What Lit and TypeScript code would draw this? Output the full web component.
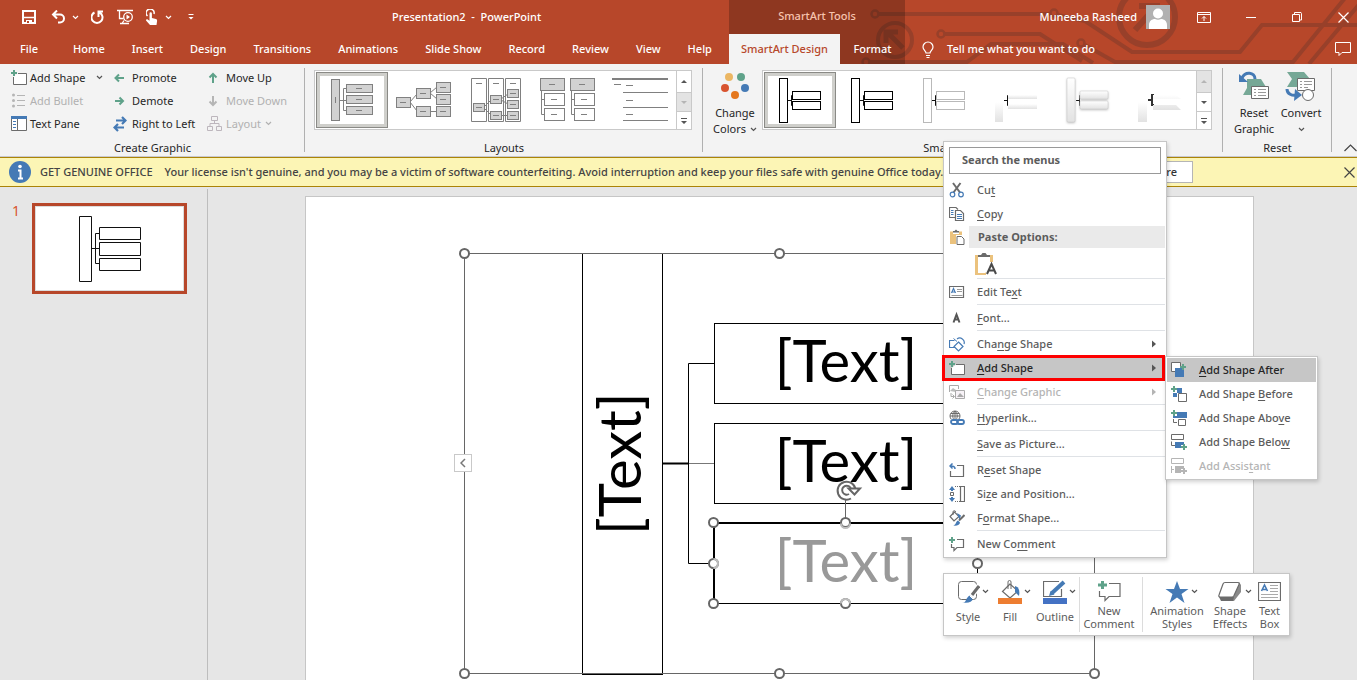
import { LitElement, html, css, svg, nothing } from "lit";
import { customElement } from "lit/decorators.js";
import { classMap } from "lit/directives/class-map.js";

const icon = (w: number, h: number, body: unknown) =>
  html`<svg class="ic" width=${w} height=${h} viewBox="0 0 ${w} ${h}" fill="none" aria-hidden="true">${body}</svg>`;

const GREEN = "#5fa28a";
const BLUE = "#457ab5";
const GREY = "#6b6b6b";

const plus = (x: number, y: number, c = GREEN) =>
  svg`<path d="M${x} ${y}h6M${x + 3} ${y - 3}v6" stroke=${c} stroke-width="2"/>`;

const chevron = (c = "#555") => icon(7, 5, svg`<path d="M1 1l2.5 2.5L6 1" stroke=${c} stroke-width="1.2"/>`);

/* Ribbon command icons */
const addShape = icon(16, 15, svg`<path d="M7 3.500h8.500v11H2.500V7" fill="#fff"/><path d="M7 3.500h8.500v11H2.500V7" stroke=${GREY}/>${plus(0, 3)}`);
const addBullet = icon(16, 15, svg`<g fill="#b5b5b5"><circle cx="2.500" cy="2" r="1.500"/><circle cx="2.500" cy="7.500" r="1.500"/><circle cx="2.500" cy="13" r="1.500"/></g><path d="M6 2.500h8M6 7.500h8M6 12.500h8" stroke="#b5b5b5"/>`);
const textPane = icon(16, 15, svg`<path d="M.5.5h15v14H.5z" fill="#fff" stroke=${GREY}/><path d="M0 0h16v3H0z" fill=${BLUE}/><path d="M6.500 3v12" stroke=${GREY}/><path d="M2 5.500h3M2 8.500h3M2 11.500h3" stroke=${BLUE}/>`);
const promote = icon(14, 12, svg`<path d="M11 6H3M6 2.500L2.500 6 6 9.500" stroke=${GREEN} stroke-width="2"/>`);
const demote = icon(14, 12, svg`<path d="M2 6h8M6.500 2.500L10 6 6.500 9.500" stroke=${GREEN} stroke-width="2"/>`);
const rtl = icon(14, 16, svg`<path d="M3 4.500h9M9 1l3.500 3.500L9 8M11 11.500H2M5 8l-3.500 3.500L5 15" stroke=${BLUE} stroke-width="2.200"/>`);
const moveUp = icon(14, 12, svg`<path d="M6 11V3M2.500 5.500L6 2l3.500 3.500" stroke=${GREEN} stroke-width="2"/>`);
const moveDown = icon(14, 12, svg`<path d="M6 1v8M2.500 6.500L6 10l3.500-3.500" stroke="#b5b5b5" stroke-width="2"/>`);
const layoutIcon = icon(16, 15, svg`<path d="M4.500.5h6v4h-6zM.5 10.500h5v4h-5zM9.500 10.500h5v4h-5zM7.500 5v3M3 10V7.500h9V10" stroke="#bdb6bd"/>`);

/* Title bar icons */
const save = icon(14, 14, svg`<path d="M1 1h12v12H1z" stroke="#fff" stroke-width="2"/><path d="M1 7.500h12" stroke="#fff" stroke-width="1.500"/><path d="M4 10h6v4H4z" fill="#fff"/><path d="M5 11h2v2H5z" fill="#b7472a"/>`);
const undo = icon(15, 14, svg`<path d="M2 4.500h7a4 4 0 0 1 0 8H7M6 .5l-4 4 4 4" stroke="#fff" stroke-width="2"/>`);
const redo = icon(14, 14, svg`<path d="M3.500 2.500a5.500 5.500 0 1 0 5 0M7.500 7V1.500H12" stroke="#fff" stroke-width="2"/>`);
const show = icon(17, 16, svg`<path d="M0 1.500h16M2.500 2v7.500h4M5 14.500l2-3M3 14.500h9" stroke="#fff" stroke-width="1.300"/><circle cx="11" cy="8" r="4.300" stroke="#fff" stroke-width="1.300" fill="#b7472a"/><path d="M9.500 5.500v5L13 8z" fill="#fff"/>`);
const touch = icon(13, 16, svg`<path d="M1.500 7A4 4 0 1 1 8 5" stroke="#fff" stroke-width="1.500"/><path d="M3.500 4.500a1.200 1.200 0 0 1 2.400 0V9l4 1c1 .3 1.300 1 1.200 2l-.6 4H4L0 11.500c0-1 1-1.500 2-.8l1.500 1z" fill="#fff"/>`);
const customize = icon(8, 8, svg`<path d="M1.500 1.500h5" stroke="#fff"/><path d="M1.500 4h5L4 6.500z" fill="#fff"/>`);
const bulb = icon(12, 17, svg`<path d="M4 12c0-2-3-3-3-6a5 5 0 0 1 10 0c0 3-3 4-3 6zM4 14.500h4M4.500 16.500h3" stroke="#fff" stroke-width="1.200"/>`);
const comment = icon(17, 15, svg`<path d="M.5.500h15v10H7l-3 3v-3H.5z" stroke="#fff"/>`);
const ribbonOpts = icon(14, 11, svg`<path d="M.5.5h13v10H.5zM.5 2.500h13M7 9V4.500M5 6.500l2-2 2 2" stroke="#fff"/>`);
const minimize = icon(11, 11, svg`<path d="M0 5.500h10" stroke="#fff"/>`);
const restore = icon(11, 11, svg`<path d="M.5 2.500h7v7h-7zM2.500 2.500v-2H9l.5 1V8H8" stroke="#fff"/>`);
const closeIcon = (c: string) => icon(11, 11, svg`<path d="M.5.5l10 10M10.500.5l-10 10" stroke=${c} stroke-width="1.200"/>`);

/* Context menu icons */
const M = {
  cut: icon(16, 16, svg`<path d="M4 1l7 9.500M11.500 1l-7 9.500" stroke=${GREY} stroke-width="2"/><circle cx="3.500" cy="12.500" r="2.300" stroke=${BLUE} stroke-width="1.200" fill="#fff"/><circle cx="12" cy="12.500" r="2.300" stroke=${BLUE} stroke-width="1.200" fill="#fff"/>`),
  copy: icon(16, 16, svg`<path d="M6 11.500H.5v-10H7l2 2M6.500 4.500h5l3 3v7h-8z" stroke=${GREY} stroke-width="1.200"/><path d="M2 4.500h2.500M2 6.500h2.500M2 8.500h2.500M8 8.500h5M8 10.500h5M8 12.500h5" stroke=${BLUE}/>`),
  paste: icon(16, 16, svg`<path d="M1 2.500h3V5h6V2.500h3V6H7v9H1z" fill="#ebc27d"/><path d="M4 3.500h6V2H8.500L7 .5 5.500 2H4z" fill=${GREY}/><path d="M8 7.500h4.500l2.500 2.500v5.500H8z" fill="#fff" stroke=${GREY}/>`),
  editText: icon(16, 14, svg`<path d="M.5 1.500h14v11H.5z" fill="#fff" stroke=${GREY} stroke-width="1.200"/><path d="M2.500 8l2-4.500 2 4.500M3 7h3" stroke=${BLUE} stroke-width="1.200"/><path d="M8 4.500h5M8 6.500h5M2.500 10.500h11" stroke="#9a9a9a"/>`),
  font: icon(16, 14, svg`<path d="M4.500 11.500L7.500 3.500l3 8M5.500 8.500h4" stroke="#555" stroke-width="2"/>`),
  changeShape: icon(16, 16, svg`<path d="M6 11.500H.5v-7h5M8 3a4.500 4.500 0 0 1 7 5" stroke=${BLUE} stroke-width="1.200"/><path d="M4.500 2.500l3.500 3" stroke=${BLUE}/><path d="M9.500 6l4.500 4.500L9.500 15 5 10.500z" stroke=${BLUE} stroke-width="1.200" fill="#fff"/>`),
  addShape: icon(16, 15, svg`<path d="M7 3.500h8.500v10H2.500V7" fill="#fff" stroke=${GREY}/>${plus(0, 3)}`),
  changeGraphic: icon(16, 16, svg`<path d="M.5 8V1.500h9V5" stroke="#aaa"/><path d="M1 7l3-3 3 2v2z" fill="#bbb"/><path d="M2 9v3.500h3M3.500 10.500l2 2-2 2" stroke="#aaa"/><path d="M6.500 6.500h9v8h-9z" fill="#f7f2f7" stroke="#aaa"/><path d="M8 13l3-4 4 4z" fill="#aaa"/>`),
  link: icon(16, 16, svg`<circle cx="6" cy="6" r="5" stroke=${GREY}/><path d="M1 6h10M6 1v10M2 3.500h8M6 1C3 4 3 8 6 11M6 1c3 3 3 7 0 10" stroke=${GREY}/><path d="M1 9h15v7H1z" fill="#fff"/><rect x="2" y="10" width="7" height="4" rx="2" stroke=${BLUE} stroke-width="1.800"/><rect x="8" y="10" width="7" height="4" rx="2" stroke=${BLUE} stroke-width="1.800"/>`),
  reset: icon(16, 15, svg`<path d="M8 2.500h6.500v11H1.500V8" stroke=${GREY} stroke-width="1.200"/><path d="M6 6c0-2-1-3-4-3M3.500.5L1 3l2.500 2.500" stroke=${BLUE} stroke-width="1.500"/>`),
  size: icon(16, 16, svg`<path d="M0 4l3-4 3 4zM0 12l3 4 3-4z" fill=${BLUE}/><path d="M3 3v2M3 11v2" stroke=${BLUE} stroke-width="2"/><path d="M1.500 6.500h3v3h-3z" fill="#fff" stroke=${GREY}/><path d="M6 .5h5M6 15.500h5" stroke=${GREY} stroke-dasharray="1 1"/><path d="M11.500.5h4v15h-4z" stroke=${GREY} stroke-width="1.200"/>`),
  format: icon(16, 16, svg`<path d="M5.500 2L1 6.500 5 11l5-4.500z" stroke=${GREY} stroke-width="1.200"/><path d="M4 5V2a1.300 1.300 0 0 1 2.600 0" stroke=${GREY}/><path d="M8 3l4 2.500-1.500 4.500z" fill=${BLUE}/><path d="M15.500 5L10 10.500" stroke=${GREY} stroke-width="2"/><path d="M4 15.500c3 0 2.500-4 5-5l2 2c0 2.500-3 3.500-7 3z" fill=${BLUE}/>`),
  comment: icon(16, 15, svg`<path d="M8 2.500h6.500v8H8l-3 3v-3H2.500V7" stroke=${GREY} stroke-width="1.200"/>${plus(0, 3)}`),
};

/* Submenu icons */
const S = {
  after: icon(16, 16, svg`<path d="M.5.500h9v9h-9z" fill="#fff" stroke=${GREY}/><path d="M4 6h9v9H4z" fill=${BLUE}/>${plus(9, 5)}`),
  before: icon(16, 16, svg`<path d="M6 2h5v5H6z" fill=${BLUE}/><path d="M2 7h4v4H2z" fill=${BLUE}/><path d="M7.500 7.500h8v8h-8z" fill="#fff" stroke=${GREY}/>${plus(0, 3)}`),
  above: icon(16, 16, svg`<path d="M6 2h10v6H2V6h4z" fill=${BLUE}/><path d="M2.500 9v3.500H6M7.500 9.500h7v6h-7z" stroke=${GREY}/>${plus(0, 3)}`),
  below: icon(16, 16, svg`<path d="M.5.500h12v5H.5zM.5 7.500v4H4" stroke=${GREY}/><path d="M4 8h9v3h-3v3H4z" fill=${BLUE}/>${plus(10, 13)}`),
  assistant: icon(16, 16, svg`<path d="M.5.500h12v5H.5zM.5 8v7M1 11.500h2" stroke="#b5b5b5"/><path d="M4 8h9v3h-3v4H4z" fill="#b5b5b5"/>${plus(10, 13, "#b5b5b5")}`),
};

type Box = [number, number, number, number, boolean?];
const boxes = (list: Box[]) => list.map(([x, y, w, h, plain]) => svg`
  <rect x=${x} y=${y} width=${w} height=${h} fill=${plain ? "#fff" : "#d2d2d2"} stroke="#808080"/>
  <path d=${w > 10 ? `M${Math.floor(x + w / 2) - 3} ${Math.floor(y + h / 2) + 0.5}h6` : `M${x + w / 2} ${y + h / 2 - 3}v6`} stroke="#808080"/>`);

const layouts = [
  svg`<path d="M24 28.500h7M31 16.500h-3.500v22H31" stroke="#808080"/>${boxes([[15.5, 7.5, 8, 41], [30.5, 12.5, 26, 8], [30.5, 23.5, 26, 8], [30.5, 34.5, 26, 8]])}`,
  svg`<path d="M22 30l7-8M22 30l7 9M42 21l7-6M42 21l7 6M42 39.500h7" stroke="#808080"/>${boxes([[8.5, 25.5, 14, 10], [28.5, 16.5, 14, 10], [28.5, 34.5, 14, 10], [48.5, 10.5, 14, 10], [48.5, 22.5, 14, 10], [48.5, 34.5, 14, 10]])}`,
  svg`<path d="M11.500 6.500h15v43h-15zM28.500 6.500h15v43h-15zM45.500 6.500h15v43h-15zM16 11.500h6M33 11.500h6M50 11.500h6" stroke="#808080"/><path d="M24 35l7-7M24 36l7 7M41 27l7-5M41 28l7 4M41 43.500h7" stroke="#808080"/>${boxes([[13.5, 31.5, 11, 8], [30.5, 23.5, 11, 8], [30.5, 39.5, 11, 8], [47.5, 17.5, 11, 8], [47.5, 28.5, 11, 8], [47.5, 39.5, 11, 8]])}`,
  svg`<path d="M9.500 18v24.500H13M9.500 27.500H13M39.500 18v24.500H43M39.500 27.500H43" stroke="#808080"/>${boxes([[8.5, 6.5, 24, 12], [38.5, 6.5, 24, 12], [12.5, 21.5, 20, 12, true], [12.5, 36.5, 20, 12, true], [42.5, 21.5, 20, 12, true], [42.5, 36.5, 20, 12, true]])}`,
  svg`<path d="M8 7h56" stroke="#808080" stroke-width="2"/><path d="M10 12.500h7M22 13.500h7M19 20.500h45M22 28.500h7M19 35.500h45M22 42.500h7M19 48.500h45" stroke="#808080"/>`,
];

const bracket = svg`<path d="M24 28.500h3M30 23.500h-2.500v10H30" stroke="#111"/>`;
const outlined = (c: string, w: number) => svg`${bracket}<g fill="#fff" stroke=${c} stroke-width=${w}><rect x="15.500" y="6.500" width="8" height="44"/><rect x="28.500" y="19.500" width="28" height="8"/><rect x="28.500" y="29.500" width="28" height="8"/></g>`;
const styles6 = [
  outlined("#000", 1),
  outlined("#000", 1),
  outlined("#b9b9b9", 1),
  svg`${bracket}<g fill="url(#fade)"><rect x="15" y="30" width="8" height="20"/><rect x="28" y="23" width="29" height="4"/><rect x="28" y="32" width="29" height="5"/></g>`,
  svg`${bracket}<g fill="url(#fade)" stroke="#c5c5c5" stroke-width=".5" class="raised"><rect x="15" y="6" width="8" height="44" rx="1"/><rect x="28" y="19" width="28" height="8" rx="1"/><rect x="28" y="29" width="28" height="8" rx="1"/></g>`,
  svg`<path d="M24 28h3M30 23h-2v10h2" stroke="#333" stroke-width="2"/><g fill="url(#fade)"><rect x="14" y="30" width="9" height="20"/><path d="M29 27v-4h23l5 4zM29 38v-5h23l5 5z"/></g>`,
];
const fade = svg`<defs><linearGradient id="fade" x1="0" y1="0" x2="0" y2="1"><stop offset="0" stop-color="#fff"/><stop offset="1" stop-color="#e2e2e2"/></linearGradient></defs>`;

type Item = { i?: unknown; t: unknown; sub?: boolean; off?: boolean; on?: boolean; sep?: boolean };
const menuTop: Item[] = [
  { i: M.cut, t: html`Cu<u>t</u>` },
  { i: M.copy, t: html`<u>C</u>opy` },
];
const menuRest: Item[] = [
  { i: M.editText, t: html`Edit Te<u>x</u>t`, sep: true },
  { i: M.font, t: html`<u>F</u>ont...`, sep: true },
  { i: M.changeShape, t: html`Cha<u>n</u>ge Shape`, sep: true, sub: true },
  { i: M.addShape, t: html`<u>A</u>dd Shape`, sub: true, on: true },
  { i: M.changeGraphic, t: html`<u>C</u>hange Graphic`, sub: true, off: true },
  { i: M.link, t: html`<u>H</u>yperlink...`, sep: true },
  { t: html`<u>S</u>ave as Picture...`, sep: true },
  { i: M.reset, t: html`R<u>e</u>set Shape`, sep: true },
  { i: M.size, t: html`Si<u>z</u>e and Position...` },
  { i: M.format, t: html`F<u>o</u>rmat Shape...` },
  { i: M.comment, t: html`New Co<u>m</u>ment`, sep: true },
];
const subMenu: Item[] = [
  { i: S.after, t: html`<u>A</u>dd Shape After`, on: true },
  { i: S.before, t: html`Add Shape <u>B</u>efore` },
  { i: S.above, t: html`Add Shape Abo<u>v</u>e` },
  { i: S.below, t: html`Add Shape Belo<u>w</u>` },
  { i: S.assistant, t: html`Add Assis<u>t</u>ant`, off: true },
];

const base = css`
  * { box-sizing: border-box; }
  button { font: inherit; color: inherit; background: none; border: 0; padding: 0; margin: 0; }
  .ic { display: block; flex: none; }
`;

@customElement("title-header")
class TitleHeader extends LitElement {
  static styles = [base, css`
    :host { display: block; position: relative; background: #b7472a; color: #fff; height: 64px; flex: none; font-weight: 500; white-space: nowrap; }
    .circuit { position: absolute; right: 0; top: 0; }
    .bar { position: relative; display: flex; height: 64px; }
    .left { display: flex; flex-direction: column; width: 729px; flex: none; }
    .row { display: flex; align-items: center; height: 34px; }
    .quick { display: flex; align-items: center; padding-left: 22px; width: 392px; }
    .quick button { margin-left: 12px; }
    .quick .first { margin-left: 0; }
    .quick .wide { margin-left: 15px; }
    .quick .drop { margin-left: 6px; }
    .tabs { display: flex; height: 30px; align-items: center; }
    .left .tabs { padding-left: 20px; }
    .left .tabs button { margin-right: 27px; flex: none; }
    .left .tabs .file { margin-right: 35px; }
    .left .tabs button:last-child { margin-right: 0; }
    .tools { width: 176px; background: rgba(0, 0, 0, .22); flex: none; }
    .tools .row { justify-content: center; color: #f6c3ae; padding-bottom: 2px; }
    .tools .tabs button { height: 30px; }
    .tools .active { background: #f3f3f3; color: #b7472a; width: 111px; }
    .tools .plain { flex: 1; }
    .right { flex: 1; display: flex; flex-direction: column; }
    .right .row { justify-content: flex-end; padding-right: 8px; }
    .avatar { margin: 0 27px 0 9px; }
    .win { margin-left: 35px; }
    .tell { display: flex; align-items: center; gap: 13px; padding-left: 17px; flex: 1; }
    .right .tabs .talk { padding-right: 5px; }
  `];
  render() {
    return html`
      <svg class="circuit" width="500" height="64" viewBox="0 0 500 64" fill="none" stroke="#98402a" stroke-width="4" aria-hidden="true">
        <circle cx="18" cy="14" r="3.500" stroke-width="2.500"/><path d="M22 14h171"/><circle cx="197" cy="13" r="3.500" stroke-width="2.500"/>
        <circle cx="38" cy="40" r="17"/><path d="M46 48L31 33M29 43V32h12" stroke-width="5"/>
        <path d="M200 15l28 6 47 31h108l22-27h95"/>
        <circle cx="84" cy="34" r="3.500" stroke-width="2.500"/><path d="M88 34h95l42 27"/>
        <circle cx="9" cy="62" r="3.500" stroke-width="2.500"/><path d="M13 62h97l24-18h72l30 19"/>
        <circle cx="224" cy="43" r="3.500" stroke-width="2.500"/><path d="M228 45l30 17h178l52-64M452 64l52-62"/>
        <circle cx="290" cy="17" r="28" stroke-width="6"/><path d="M278 30l20-22M282 6h18v18" stroke-width="6"/>
      </svg>
      <div class="bar">
        <div class="left">
          <div class="row">
            <div class="quick">
              <button class="first" aria-label="Save">${save}</button><button class="wide" aria-label="Undo">${undo}</button>
              <button class="drop" aria-label="Undo options">${chevron("#fff")}</button>
              <button aria-label="Redo">${redo}</button><button aria-label="Start slide show">${show}</button>
              <button aria-label="Touch mode">${touch}</button><button class="drop" aria-label="Touch options">${chevron("#fff")}</button>
              <button class="wide" aria-label="Customize toolbar">${customize}</button>
            </div>
            <span>Presentation2&nbsp; -&nbsp; PowerPoint</span>
          </div>
          <nav class="tabs">
            <button class="file">File</button>
            ${["Home", "Insert", "Design", "Transitions", "Animations", "Slide Show", "Record", "Review", "View", "Help"].map(t => html`<button>${t}</button>`)}
          </nav>
        </div>
        <div class="tools">
          <div class="row">SmartArt Tools</div>
          <div class="tabs"><button class="active">SmartArt Design</button><button class="plain">Format</button></div>
        </div>
        <div class="right">
          <div class="row">
            <span>Muneeba Rasheed</span>
            <svg class="ic avatar" width="24" height="24" viewBox="0 0 24 24" aria-hidden="true"><path d="M0 0h24v24H0z" fill="#b1b1b1"/><circle cx="12" cy="8.500" r="5" fill="#fff"/><path d="M3 24v-4c0-4 3-6 6-6 2 1 4 1 6 0 3 0 6 2 6 6v4z" fill="#fff"/></svg>
            <button aria-label="Ribbon display options">${ribbonOpts}</button>
            <button class="win" aria-label="Minimize">${minimize}</button>
            <button class="win" aria-label="Restore">${restore}</button>
            <button class="win" aria-label="Close">${closeIcon("#fff")}</button>
          </div>
          <div class="tabs"><button class="tell">${bulb}Tell me what you want to do</button><button class="talk" aria-label="Comments">${comment}</button></div>
        </div>
      </div>`;
  }
}

@customElement("ribbon-bar")
class RibbonBar extends LitElement {
  static styles = [base, css`
    :host { display: flex; background: #f3f3f3; color: #262626; height: 93px; border-bottom: 1px solid #c9c9cf; flex: none; position: relative; padding-right: 25px; }
    .group { display: flex; flex-direction: column; position: relative; padding-top: 2px; }
    .group::after { content: ""; width: 1px; background: #b0b0b0; position: absolute; right: 0; top: 4px; height: 84px; }
    .label { text-align: center; line-height: 16px; margin-top: auto; }
    .body { display: flex; justify-content: center; height: 73px; }
    .create { width: 305px; }
    .create .body { display: grid; grid-template-columns: 102px 94px 1fr; grid-auto-rows: 23px; padding-left: 11px; justify-content: start; }
    .create button { display: flex; align-items: center; text-align: left; white-space: nowrap; }
    .slot { width: 19px; display: flex; flex: none; }
    .more { margin-left: 11px; }
    .near { margin-left: 4px; }
    .off { color: #b1b1b1; }
    .layouts { width: 398px; }
    .layouts .body { padding-right: 2px; }
    .styles { flex: 1; }
    .reset { width: 109px; }
    .gallery { display: flex; height: 60px; border: 1px solid #c9c9c9; background: #fff; margin-top: 4px; padding-left: 1px; }
    .layouts .gallery { width: 378px; }
    .cell { width: 72px; height: 56px; margin-top: 1px; display: block; flex: none; }
    .cell svg { display: block; }
    .picked { box-shadow: inset 0 0 0 1px #8a8a86, inset 0 0 0 4px #cfcfcb; }
    .scroll { display: grid; grid-template-rows: 21px 19px 18px; width: 15px; border-left: 1px solid #c9c9c9; margin-left: auto; }
    .scroll button { display: grid; place-items: center; }
    .scroll button + button { border-top: 1px solid #c9c9c9; }
    .scroll .dim { background: #e3e3e3; }
    .tall { display: flex; flex-direction: column; align-items: center; line-height: 16px; padding-top: 5px; }
    .tall .ic { margin-bottom: 4px; }
    .tall .inl { display: flex; align-items: center; gap: 4px; height: 16px; }
    .tall .inl .ic { margin: 0; }
    .colors { width: 54px; margin-left: 5px; }
    .styles .body { justify-content: flex-start; }
    .styles .gallery { flex: 1; margin-right: 11px; }
    .reset .tall { width: 47px; }
    .fold { position: absolute; right: 0; bottom: 4px; }
    .raised { filter: drop-shadow(0 1px 1px #c5c5c5); }
  `];
  private cell = (body: unknown, i: number) => html`<button class=${classMap({ cell: true, picked: i === 0 })} aria-label="Gallery option ${i + 1}"><svg width="72" height="56" fill="none">${fade}${body}</svg></button>`;
  private scroll = (dim: number) => html`<div class="scroll">
    ${["M0 4h6L3 1z", "M0 1h6L3 4z", "M0 4h6L3 7zM0 1h6v1H0z"].map((d, i) => html`<button class=${i === dim ? "dim" : ""} aria-label=${["Previous row", "Next row", "More"][i]}>${icon(6, i === 2 ? 8 : 5, svg`<path d=${d} fill=${i === dim ? "#b5b5b5" : "#555"}/>`)}</button>`)}
  </div>`;
  render() {
    return html`
      <section class="group create">
        <div class="body">
          <button><span class="slot">${addShape}</span>Add Shape<span class="more">${chevron()}</span></button>
          <button><span class="slot">${promote}</span>Promote</button>
          <button><span class="slot">${moveUp}</span>Move Up</button>
          <button class="off"><span class="slot">${addBullet}</span>Add Bullet</button>
          <button><span class="slot">${demote}</span>Demote</button>
          <button class="off"><span class="slot">${moveDown}</span>Move Down</button>
          <button><span class="slot">${textPane}</span>Text Pane</button>
          <button><span class="slot">${rtl}</span>Right to Left</button>
          <button class="off"><span class="slot">${layoutIcon}</span>Layout<span class="near">${chevron("#b1b1b1")}</span></button>
        </div>
        <div class="label">Create Graphic</div>
      </section>
      <section class="group layouts">
        <div class="body"><div class="gallery">${layouts.map(this.cell)}${this.scroll(1)}</div></div>
        <div class="label">Layouts</div>
      </section>
      <section class="group styles">
        <div class="body">
          <button class="tall colors">
            ${icon(28, 30, svg`<circle cx="8" cy="6" r="4" fill="#ebb663"/><circle cx="20" cy="6" r="4" fill="#5fa28a"/><circle cx="4" cy="17" r="4" fill="#d8542f"/><circle cx="24" cy="17" r="4" fill="#457ab5"/><circle cx="14" cy="24" r="4" fill="#e4771e"/>`)}
            <span>Change</span><span class="inl">Colors ${chevron()}</span>
          </button>
          <div class="gallery">${styles6.map(this.cell)}${this.scroll(0)}</div>
        </div>
        <div class="label">SmartArt Styles</div>
      </section>
      <section class="group reset">
        <div class="body">
          <button class="tall">
            ${icon(32, 30, svg`<path d="M9 8h14l5 8-5 8H5l4-7z" fill="#76a896"/><path d="M13.500 15.500h17v12h-17z" fill="#fff" stroke=${GREY}/><path d="M16 18.500h2M16 21.500h2M16 24.500h2M20 18.500h8M20 21.500h8M20 24.500h8" stroke="#999"/><path d="M17 8c0-7-10-8-13-1" stroke=${BLUE} stroke-width="3"/><path d="M1 3v8h9z" fill=${BLUE}/>`)}
            <span>Reset</span><span>Graphic</span>
          </button>
          <button class="tall">
            ${icon(32, 30, svg`<path d="M2 1h17l6 7-6 8H2l5-8z" fill="#76a896"/><path d="M12.500 7.500h17v12h-17z" fill="#fff" stroke=${GREY}/><path d="M15 10.500h2M15 13.500h2M19 10.500h8M19 13.500h8M15 16.500h2M19 16.500h4" stroke="#999"/><circle cx="23" cy="24" r="5.500" fill="#fff" stroke=${GREY}/><path d="M2 18c0 5 5 7 10 6" stroke=${BLUE} stroke-width="3"/><path d="M10 18l7 6-8 6z" fill=${BLUE}/>`)}
            <span>Convert</span><span class="inl">${chevron()}</span>
          </button>
        </div>
        <div class="label">Reset</div>
      </section>
      <button class="fold" aria-label="Collapse the ribbon">${icon(13, 8, svg`<path d="M.5 7l6-6 6 6" stroke="#444" stroke-width="1.200"/>`)}</button>`;
  }
}

@customElement("slide-editor")
class SlideEditor extends LitElement {
  static styles = [base, css`
    :host { display: flex; flex: 1; min-height: 0; background: #e6e6e6; overflow: hidden; }
    .pane { width: 208px; flex: none; display: flex; align-items: flex-start; padding: 14px 0 0 12px; border-right: 1px solid #bdbdbd; margin-top: 2px; }
    .num { color: #d8532f; font-size: 14px; line-height: 16px; width: 20px; }
    .thumb { border: 3px solid #b7472a; background: #fff; box-shadow: inset 0 0 0 1px #dcdcdc; display: block; }
    .work { flex: 1; padding: 9px 103px 0 97px; display: flex; }
    .slide { flex: 1; height: 536px; background: #fff; border: 1px solid #c6c6c6; position: relative; }
    .lines { position: absolute; left: 0; top: 0; }
    .node { position: absolute; font: 58px/72px Lato, sans-serif; color: #000; text-align: center; border: 1px solid #000; }
    .n0 { left: 276px; top: 56px; width: 81px; height: 422px; writing-mode: vertical-rl; transform: rotate(180deg); }
    .n1, .n2 { left: 408px; width: 264px; height: 81px; }
    .n1 { top: 126px; }
    .n2 { top: 226px; }
    .n3 { left: 407px; top: 325px; width: 265px; height: 82px; color: #999; border-width: 2px 1px 1px 2px; }
    .grip { position: absolute; left: 148px; top: 257px; width: 18px; height: 18px; border: 1px solid #c9c9c9; background: #fff; display: grid; place-items: center; }
  `];
  render() {
    const frame = [[464, 253], [779, 253], [464, 673], [779, 673], [1094, 673]];
    const shape = [[713, 522], [845, 522], [713, 563], [713, 603], [845, 603], [977, 563]];
    return html`
      <aside class="pane">
        <span class="num">1</span>
        <button class="thumb" aria-label="Slide 1">
          <svg class="ic" width="149" height="85" fill="none" stroke="#111"><path d="M44.500 10.500h12v65h-12z"/><path d="M57 42.500h7M64 27.500h-3.500v30H64"/><path d="M64.500 21.500h41v12h-41zM64.500 36.500h41v13h-41zM64.500 52.500h41v12h-41z"/></svg>
        </button>
      </aside>
      <main class="work">
        <div class="slide">
          <div class="node n0">[Text]</div>
          <div class="node n1">[Text]</div>
          <div class="node n2">[Text]</div>
          <div class="node n3">[Text]</div>
          <svg class="lines" width="900" height="483" viewBox="306 197 900 483" fill="none" aria-hidden="true">
            <path d="M464.500 253.500h630v420h-630z" stroke="#666"/>
            <path d="M714 363.500h-25.500v200H714" stroke="#000"/><path d="M663 463.500h26" stroke="#000" stroke-width="2"/><path d="M689 463.500h25" stroke="#777"/>
            <path d="M845.500 500v18" stroke="#666"/>
            ${[...frame, ...shape].map(([x, y]) => svg`<circle cx=${x + 0.5} cy=${y + 0.5} r="4.500" fill="#fff" stroke="#666" stroke-width="2"/>`)}
            <g stroke="#bdbdbd" stroke-width="2"><path d="M841 523.500a4.500 4.500 0 0 0 9 0M841 603.500a4.500 4.500 0 0 1 9 0M713.500 559a4.500 4.500 0 0 1 0 9"/></g>
            <path d="M851 498.500a9 9 0 1 1 4.500-9M849 494a4.500 4.500 0 1 1 2-5" stroke="#666" stroke-width="2"/>
            <path d="M848.500 488.500h11.500l-5.500 6z" fill="#fff" stroke="#666" stroke-width="2"/>
          </svg>
          <button class="grip" aria-label="Open text pane">${icon(6, 10, svg`<path d="M5 1L1 5l4 4" stroke="#777" stroke-width="1.500"/>`)}</button>
        </div>
      </main>`;
  }
}

@customElement("context-menu")
class ContextMenu extends LitElement {
  static styles = [base, css`
    :host { display: block; color: #5c5c5c; }
    .panel { position: absolute; background: #fff; border: 1px solid #c6c6c6; box-shadow: 1px 2px 4px rgba(0, 0, 0, .18); }
    .main { left: 943px; top: 141px; width: 224px; padding-bottom: 1px; }
    .sub { left: 1165px; top: 356px; width: 153px; padding: 1px; }
    .search { font: bold 11px/16px "Noto Sans", sans-serif; display: block; width: calc(100% - 10px); height: 27px; margin: 5px 5px 4px; border: 1px solid #999; padding: 0 12px 2px; background: #fff; }
    .search::placeholder { color: #5c5c5c; opacity: 1; }
    .item { display: flex; align-items: center; width: 100%; height: 24px; text-align: left; position: relative; font-weight: 500; }
    .slot { width: 33px; display: flex; padding-left: 5px; flex: none; }
    .sub .slot { width: 32px; padding-left: 4px; }
    .item .txt { flex: 1; }
    u { text-underline-offset: 2px; }
    .arrow { margin-right: 9px; }
    .off { color: #b4b4b4; }
    .on { background: #c6c6c6; color: #262626; }
    .main .on::after { content: ""; position: absolute; inset: -1px 1px -1px -2px; border: 3px solid #fd0000; }
    .sep { height: 1px; background: #dfe2e6; margin: 0 1px 1px 33px; }
    .head { display: flex; align-items: center; height: 22px; font-weight: bold; }
    .head .slot { width: 25px; }
    .head .txt { flex: 1; background: #eaeaea; line-height: 22px; padding-left: 9px; margin-right: 1px; }
    .opt { display: block; padding: 2px 0 0 31px; height: 30px; }
  `];
  private row = (m: Item) => html`
    ${m.sep ? html`<div class="sep"></div>` : nothing}
    <button role="menuitem" class=${classMap({ item: true, on: !!m.on, off: !!m.off })} ?disabled=${!!m.off}>
      <span class="slot">${m.i ?? nothing}</span><span class="txt">${m.t}</span>
      ${m.sub ? html`<span class="arrow">${icon(5, 8, svg`<path d="M0 .5v7L4 4z" fill=${m.off ? "#b4b4b4" : "#555"}/>`)}</span>` : nothing}
    </button>`;
  render() {
    return html`
      <div class="panel main" role="menu">
        <input class="search" type="text" placeholder="Search the menus" aria-label="Search the menus">
        ${menuTop.map(this.row)}
        <div class="head"><span class="slot">${M.paste}</span><span class="txt">Paste Options:</span></div>
        <button class="opt" aria-label="Keep text only">${icon(22, 24, svg`<path d="M0 3h3v17h8v3H0zM14 3h4v7h-4z" fill="#ebc27d"/><path d="M3 5h12v12l-5 4H3z" fill="#fff"/><path d="M3 5h12V3h-3L10.500 1h-3L6 3H3z" fill=${GREY}/><path d="M12 22l4.500-10L21 22M13.500 18.500h6" stroke="#4a4a4a" stroke-width="2"/>`)}</button>
        ${menuRest.map(this.row)}
      </div>
      <div class="panel sub" role="menu">${subMenu.map(this.row)}</div>`;
  }
}

@customElement("mini-toolbar")
class MiniToolbar extends LitElement {
  static styles = [base, css`
    :host { position: absolute; left: 943px; top: 573px; height: 63px; display: flex; background: #fff; border: 1px solid #c6c6c6; box-shadow: 1px 2px 4px rgba(0, 0, 0, .18); padding: 0 4px 0 3px; color: #5c5c5c; }
    button { display: flex; flex-direction: column; align-items: center; padding-top: 5px; line-height: 13px; }
    .one { line-height: 26px; }
    .pic { display: flex; align-items: center; height: 25px; }
    .pic .ic + .ic { margin: 0 -9px 0 2px; }
    .w42 { width: 42px; }
    .w48 { width: 48px; }
    .w58 { width: 58px; }
    .w31 { width: 31px; }
    i { width: 1px; margin: 3px 0; background: #dcdcdc; }
    .gap { margin: 3px 5px 3px 4px; }
  `];
  render() {
    const c = chevron();
    return html`
      <button class="one w42"><span class="pic">${icon(23, 24, svg`<rect x="1.500" y="1.500" width="18" height="18" rx="3" stroke=${GREY}/><path d="M22 6l-8 10" stroke="#fff" stroke-width="6"/><path d="M22 6l-7 9" stroke=${GREY} stroke-width="3"/><path d="M5 22.500c5 1 3-5 8-7l3 3c-1 4-5 5-11 4z" fill=${BLUE}/><path d="M13 16l3 3" stroke="#fff"/>`)}${c}</span>Style</button>
      <button class="one w42"><span class="pic">${icon(24, 24, svg`<path d="M12 4L4.500 11.500 12 18l8-7z" stroke=${GREY} stroke-width="1.200"/><path d="M10 9V2a1.500 1.500 0 0 1 3 0v7" stroke=${GREY}/><path d="M17 6c4 1 5 5 4 10l-4-4z" fill=${BLUE}/><path d="M0 18h24v6H0z" fill="#ed7d31"/>`)}${c}</span>Fill</button>
      <button class="one w48"><span class="pic">${icon(24, 24, svg`<path d="M16 1.500H.5v15h18V9" stroke=${GREY} stroke-width="1.200"/><path d="M21 2L9 13" stroke=${BLUE} stroke-width="4"/><path d="M6 16l1.500-5 4 3.500z" fill=${BLUE}/><path d="M0 18h24v6H0z" fill="#4472c4"/>`)}${c}</span>Outline</button>
      <i></i>
      <button class="w58"><span class="pic">${icon(24, 24, svg`<path d="M12 3.500h11v13H12l-4 4v-4H2.500V11" stroke=${GREY} stroke-width="1.200"/><path d="M1 5h9M5.500 1v8" stroke=${GREEN} stroke-width="3"/>`)}</span>New<br>Comment</button>
      <i class="gap"></i>
      <button class="w58"><span class="pic">${icon(24, 24, svg`<path d="M12 1l3 8h8.500l-7 5 3 9-7.500-5.500L4.500 23l3-9-7-5H9z" fill=${BLUE}/>`)}${c}</span>Animation<br>Styles</button>
      <button class="w48"><span class="pic">${icon(26, 24, svg`<path d="M6 21h11l7-9V5l-2-3-6 14z" fill="#8a8a8a"/><path d="M8 2.500h13c1 0 1.500 1 1 2l-5 11c-.5 1-1 1.500-2 1.500H3c-1 0-1.500-1-1-2l4-11c.4-1 1-1.500 2-1.500z" fill="#fff" stroke=${GREY} stroke-width="1.200"/><path d="M2 17l2 4h12l1-4z" fill=${GREY}/>`)}${c}</span>Shape<br>Effects</button>
      <button class="w31"><span class="pic">${icon(23, 22, svg`<path d="M.5 1.500h22v18H.5z" stroke=${GREY} stroke-width="1.200"/><path d="M3.500 10l3-6 3 6M4.500 8.500h4" stroke=${BLUE} stroke-width="1.600"/><path d="M12 4.500h8M12 7.500h8M12 10.500h8M3 13.500h17M3 16.500h17" stroke="#aaa"/>`)}</span>Text<br>Box</button>`;
  }
}

@customElement("app-root")
class AppRoot extends LitElement {
  static styles = [base, css`
    :host { display: flex; flex-direction: column; height: 100vh; overflow: hidden; position: relative; font: 11px/16px "Noto Sans", sans-serif; background: #e6e6e6; }
    .notice { display: flex; align-items: center; height: 30px; flex: none; background: #fcf5b5; border: solid #ab8407; border-width: 1px 0; color: #444; padding: 0 2px 0 9px; font-weight: 500; }
    .head { margin: 0 12px 0 9px; white-space: nowrap; }
    .msg { white-space: nowrap; }
    .more { background: #fff; border: 1px solid #b5b5b5; height: 22px; padding: 0 15px; margin-left: auto; margin-right: 151px; color: #333; }
  `];
  render() {
    return html`
      <title-header></title-header>
      <ribbon-bar></ribbon-bar>
      <div class="notice" role="status">
        ${icon(22, 22, svg`<circle cx="11" cy="11" r="11" fill=${BLUE}/><circle cx="11" cy="5.500" r="1.800" fill="#fff"/><path d="M9 9.500h2.500v7M9 17.500h5" stroke="#fff" stroke-width="2"/>`)}
        <span class="head">GET GENUINE OFFICE</span>
        <span class="msg">Your license isn't genuine, and you may be a victim of software counterfeiting. Avoid interruption and keep your files safe with genuine Office today.</span>
        <button class="more">Learn More</button>
        <button aria-label="Dismiss">${closeIcon("#444")}</button>
      </div>
      <slide-editor></slide-editor>
      <context-menu></context-menu>
      <mini-toolbar></mini-toolbar>`;
  }
}
